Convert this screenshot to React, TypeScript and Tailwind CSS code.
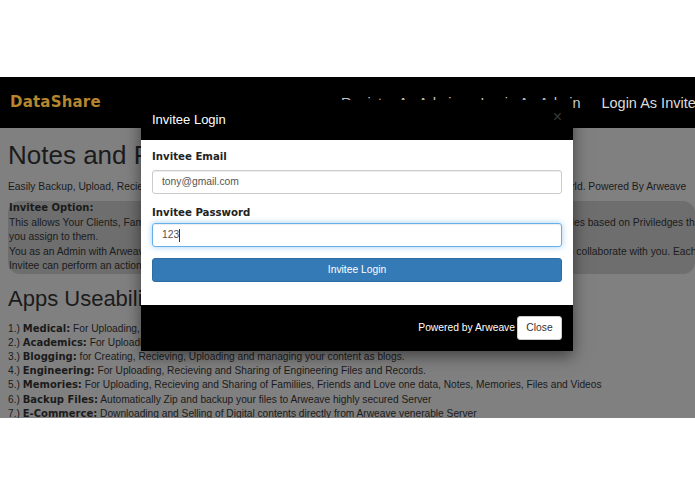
import React from "react";

const sans = { fontFamily: '"Liberation Sans", Arial, sans-serif' };
const wide = { fontFamily: '"DejaVu Sans", Verdana, sans-serif' };

export default function App() {
  const items: [string, string][] = [
    ["Medical:", "For Uploading, Recieving and Sharing of Medical Files, Reports and Records."],
    ["Academics:", "For Uploading, Recieving and Sharing of Academic Notes, Files and Records."],
    ["Blogging:", "for Creating, Recieving, Uploading and managing your content as blogs."],
    ["Engineering:", "For Uploading, Recieving and Sharing of Engineering Files and Records."],
    ["Memories:", "For Uploading, Recieving and Sharing of Familiies, Friends and Love one data, Notes, Memories, Files and Videos"],
    ["Backup Files:", "Automatically Zip and backup your files to Arweave highly secured Server"],
    ["E-Commerce:", "Downloading and Selling of Digital contents directly from Arweave venerable Server"],
  ];
  return (
    <div className="relative w-[695px] h-[494px] bg-white overflow-hidden" style={sans}>
      <div className="h-[77px]" />
      <div className="h-[341px] overflow-hidden bg-[#808080] flex flex-col">
        {/* navbar */}
        <div className="h-[51px] shrink-0 bg-black flex items-center whitespace-nowrap">
          <div
            className="w-[341px] shrink-0 pl-[10px] text-[15px] font-bold text-[#b5862d] tracking-[0.2px]"
            style={{ fontFamily: '"Comic Sans MS", "DejaVu Sans", sans-serif' }}
          >
            DataShare
          </div>
          <div className="flex gap-[21px] text-[14.5px] text-[#dcdcdc] pt-[3px]">
            <span>Register As Admin</span>
            <span>Login As Admin</span>
            <span>Login As Invitee</span>
          </div>
        </div>
        {/* content */}
        <div className="pl-[8px] text-[#1b1b1b] whitespace-nowrap">
          <div className="mt-[11px] text-[26px] leading-[33px]">Notes and Files Sharing Platform</div>
          <div className="mt-[8px] text-[10.3px] leading-[14px]">
            Easily Backup, Upload, Recieve and Share your Files, Notes, Records and Documents securely with Anyone around the world. Powered By Arweave
          </div>
          <div className="mt-[7px] bg-[#6e6e6e] rounded-[12px] pl-[1px] text-[10.3px] leading-[14.5px]">
            <div className="font-bold text-[10px]" style={wide}>
              Invitee Option:
            </div>
            <div>This allows Your Clients, Families, Friends and Loved ones to Login to access, Upload or Download all of your Notes and Files based on Priviledges that</div>
            <div>you assign to them.</div>
            <div>You as an Admin with Arweave's Wallet can create Invitees, and grant them access to your account, Files and all Records to collaborate with you. Each</div>
            <div>Invitee can perform an action based on the priviledges granted to them.</div>
          </div>
          <div className="mt-[10px] text-[22px] leading-[29px]">Apps Useability</div>
          <div className="mt-[9px] text-[10.2px] leading-[14.2px]">
            {items.map(([b, t], i) => (
              <div key={i}>
                {i + 1}.){" "}
                <span className="font-bold text-[10px]" style={wide}>
                  {b}
                </span>{" "}
                {t}
              </div>
            ))}
          </div>
        </div>
      </div>

      {/* modal */}
      <div className="absolute left-[141px] top-[100px] w-[432px] shadow-[0_5px_15px_rgba(0,0,0,0.5)]">
        <div className="relative h-[40px] bg-black flex items-center pl-[11px] text-white text-[13px]">
          Invitee Login
          <span className="absolute right-[11px] top-[9px] text-[#3a3a3a] text-[16px] leading-[16px]">×</span>
        </div>
        <div className="bg-white px-[11px] pt-[10px] pb-[23px]">
          <div className="text-[10.2px] leading-[14px] font-bold text-[#222]" style={wide}>
            Invitee Email
          </div>
          <div className="mt-[6px] h-[24px] border border-[#cccccc] rounded-[3px] flex items-center pl-[9px] text-[10.3px] text-[#555] shadow-[inset_0_1px_1px_rgba(0,0,0,0.075)]">
            tony@gmail.com
          </div>
          <div className="mt-[12px] text-[10.2px] leading-[14px] font-bold text-[#222]" style={wide}>
            Invitee Password
          </div>
          <div className="mt-[3px] h-[24px] border border-[#66afe9] rounded-[3px] flex items-center pl-[9px] text-[10.3px] text-[#555] shadow-[inset_0_1px_1px_rgba(0,0,0,0.075),0_0_6px_rgba(102,175,233,0.6)]">
            123<span className="inline-block w-px h-[13px] bg-[#333]" />
          </div>
          <div className="mt-[11px] h-[24px] rounded-[3px] bg-[#337ab7] border border-[#2e6da4] flex items-center justify-center text-white text-[10.3px]">
            Invitee Login
          </div>
        </div>
        <div className="h-[46px] bg-black flex items-center justify-end pr-[11px] gap-[2px]">
          <span className="text-white text-[10.3px]">Powered by Arweave</span>
          <span className="h-[24px] w-[45px] bg-white rounded-[3px] border border-[#ccc] flex items-center justify-center text-[10.3px] text-[#333]">
            Close
          </span>
        </div>
      </div>
    </div>
  );
}
